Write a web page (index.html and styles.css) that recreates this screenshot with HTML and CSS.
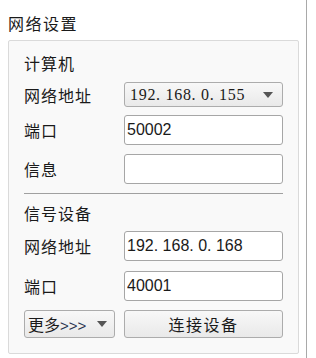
FILE: index.html
```html
<!DOCTYPE html>
<html lang="zh-CN">

<head>
    <meta charset="UTF-8">
    <meta name="viewport" content="width=device-width, initial-scale=1.0">
    <title>网络设置</title>
    <link rel="stylesheet" href="styles.css">
</head>

<body>
    <div class="panel">
        <div class="title">网络设置</div>

        <section class="group">
            <div class="heading">计算机</div>

            <div class="row row-combo">
                <span class="label">网络地址</span>
                <div class="combo combo-ip">
                    <span class="combo-text">192. 168. 0. 155</span>
                    <svg class="arrow" width="10" height="6" viewBox="0 0 10 6"><path d="M0 0H10L5 6Z" fill="#555"/></svg>
                </div>
            </div>

            <div class="row">
                <span class="label">端口</span>
                <input class="field" type="text" value="50002">
            </div>

            <div class="row">
                <span class="label">信息</span>
                <input class="field" type="text" value="">
            </div>

            <hr class="divider">

            <div class="heading heading-second">信号设备</div>

            <div class="row row-addr">
                <span class="label">网络地址</span>
                <input class="field" type="text" value="192. 168. 0. 168">
            </div>

            <div class="row row-port">
                <span class="label">端口</span>
                <input class="field" type="text" value="40001">
            </div>

            <div class="row row-actions">
                <div class="combo combo-more">
                    <span class="combo-text">更多<span class="chevrons">&gt;&gt;&gt;</span></span>
                    <svg class="arrow" width="10" height="6" viewBox="0 0 10 6"><path d="M0 0H10L5 6Z" fill="#555"/></svg>
                </div>
                <button class="connect-btn">连接设备</button>
            </div>
        </section>
    </div>
</body>

</html>
```

FILE: styles.css
```css
body {
    margin: 0;
    padding: 0;
    background: #fff;
    font-family: "Noto Sans CJK SC", "Liberation Sans", sans-serif;
    color: #1a1a1a;
}

.panel {
    width: 307px;
    height: 358px;
    border-right: 1px solid #a9a9a9;
    box-sizing: border-box;
    overflow: hidden;
}

.title {
    height: 20px;
    margin-top: 13px;
    margin-bottom: 7px;
    padding-left: 8px;
    font-size: 16px;
    line-height: 20px;
    letter-spacing: 1.5px;
}

.group {
    width: 291px;
    height: 314px;
    margin-left: 8px;
    padding: 0 15px;
    box-sizing: border-box;
    background: #f9f9f9;
    border: 1px solid #dadada;
    border-radius: 2px;
}

.heading {
    height: 20px;
    margin-top: 12px;
    font-size: 16px;
    line-height: 20px;
    letter-spacing: 1px;
}

.heading-second {
    margin-top: 9px;
}

.row {
    display: flex;
    align-items: center;
    height: 30px;
    margin-top: 9px;
}

.row-combo {
    height: 25px;
    margin-top: 9px;
}

.row-combo + .row {
    margin-top: 8px;
}

.row-addr {
    margin-top: 8px;
}

.row-port {
    margin-top: 10px;
}

.row-actions {
    height: 28px;
    margin-top: 9px;
    gap: 9px;
}

.label {
    width: 100px;
    flex: none;
    font-size: 16px;
    letter-spacing: 1px;
}

.field {
    width: 159px;
    height: 30px;
    margin: 0;
    padding: 0 2px;
    box-sizing: border-box;
    background: #fff;
    border: 1px solid #a6a6a6;
    border-radius: 3px;
    font-family: "Liberation Sans", sans-serif;
    font-size: 16px;
    color: #1a1a1a;
    outline: none;
}

.combo {
    display: flex;
    align-items: center;
    justify-content: space-between;
    height: 100%;
    box-sizing: border-box;
    background: linear-gradient(#f8f8f8, #e9e9e9);
    border: 1px solid #acacac;
    border-radius: 3px;
}

.combo-ip {
    width: 159px;
    padding: 0 9px 0 5px;
}

.combo-ip .combo-text {
    font-family: "Liberation Serif", serif;
    font-size: 16px;
    letter-spacing: 0.7px;
}

.combo-more {
    width: 91px;
    padding: 0 7px 0 3px;
}

.combo-more .combo-text {
    font-size: 16px;
}

.chevrons {
    font-family: "Liberation Sans", sans-serif;
    font-size: 15px;
    color: #2a3550;
}

.arrow {
    display: block;
    flex: none;
}

.divider {
    height: 1px;
    margin: 9px 0 0;
    border: none;
    background: #a0a0a0;
}

.connect-btn {
    width: 159px;
    height: 100%;
    margin: 0;
    padding: 0;
    background: linear-gradient(#f8f8f8, #e9e9e9);
    border: 1px solid #acacac;
    border-radius: 3px;
    font-family: "Noto Sans CJK SC", sans-serif;
    font-size: 16px;
    letter-spacing: 1.5px;
    color: #1a1a1a;
}
```
